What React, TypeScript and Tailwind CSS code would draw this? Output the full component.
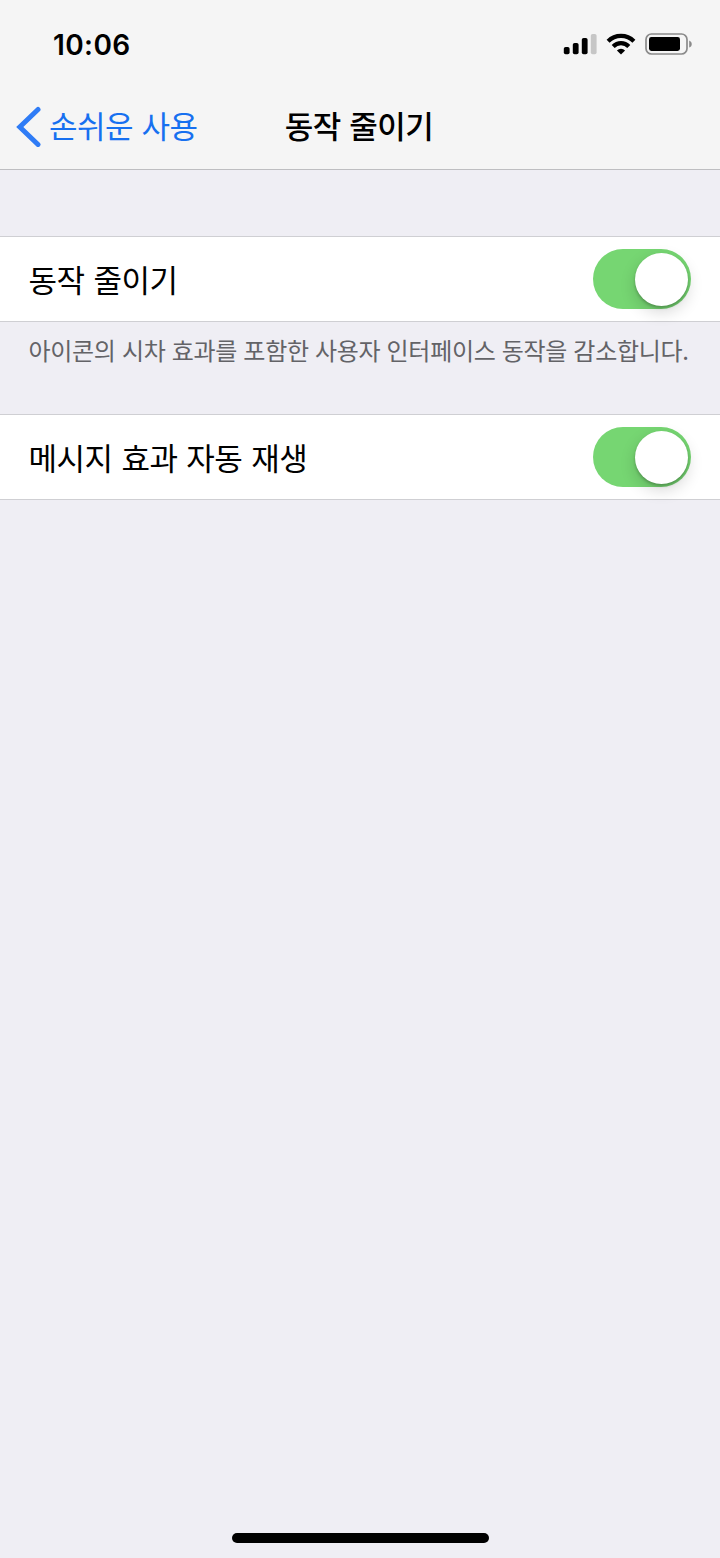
import React, { useState } from "react";

type SwitchProps = {
  label: string;
  checked: boolean;
  onChange: () => void;
};

function SignalIcon() {
  return (
    <svg width="34" height="22" viewBox="0 0 34 22">
      <rect x="0.8" y="14" width="5.8" height="7.2" rx="1.8" />
      <rect x="9.8" y="10" width="5.8" height="11.2" rx="1.8" />
      <rect x="18.8" y="5" width="5.8" height="16.2" rx="1.8" />
      <rect x="27.8" y="1" width="5.8" height="20.2" rx="1.8" fill="#c6c6c6" />
    </svg>
  );
}

function WifiIcon() {
  return (
    <svg width="30" height="22" viewBox="0 0 30 22">
      <g fill="none" stroke="#000" strokeWidth="4.2">
        <path d="M2.1 8.2a18.2 18.2 0 0 1 25.8 0" />
        <path d="M7.2 13.4a11 11 0 0 1 15.6 0" />
      </g>
      <path d="M10.9 17.4a5.9 5.9 0 0 1 8.2 0L15 21.6z" />
    </svg>
  );
}

function BatteryIcon() {
  return (
    <svg width="48" height="22" viewBox="0 0 48 22">
      <rect x="1" y="1" width="41" height="20" rx="5.5" fill="none" stroke="#8a8a8a" strokeWidth="1.7" />
      <rect x="4" y="4" width="31" height="14" rx="2.4" />
      <path d="M44.2 7.4c3.4 1.4 3.4 5.8 0 7.2z" fill="#8a8a8a" />
    </svg>
  );
}

function StatusBar() {
  return (
    <div className="flex h-[86px] items-start justify-between pr-[27px] pl-[53px]">
      <div className="mt-[27px] font-['Inter',sans-serif] text-[28px] leading-9 font-semibold tracking-[0.4px]">
        10:06
      </div>
      <div className="mt-[33px] flex">
        <SignalIcon />
        <div className="ml-[9px]">
          <WifiIcon />
        </div>
        <div className="ml-[9px]">
          <BatteryIcon />
        </div>
      </div>
    </div>
  );
}

function SwitchRow({ label, checked, onChange }: SwitchProps) {
  return (
    <div className="flex h-[86px] items-center justify-between border-y border-[#cfcfd3] bg-white pr-[29px] pl-[28.5px]">
      <span className="text-[31px] leading-10 tracking-[-0.5px] [word-spacing:2.4px]">
        {label}
      </span>
      <button
        role="switch"
        aria-checked={checked}
        aria-label={label}
        onClick={onChange}
        className={`flex h-[60px] w-[98px] items-center rounded-full px-[3px] ${
          checked ? "justify-end bg-[#76d672]" : "justify-start bg-[#e5e5ea]"
        }`}
      >
        <span className="size-[53px] rounded-full bg-white shadow-[0_6px_16px_rgba(0,0,0,0.16),0_2px_3px_rgba(0,0,0,0.22)]" />
      </button>
    </div>
  );
}

function App() {
  const [reduceMotion, setReduceMotion] = useState(true);
  const [autoPlay, setAutoPlay] = useState(true);

  return (
    <div className="flex h-[1558px] w-[720px] flex-col bg-[#efeef4] font-['Noto_Sans_CJK_KR',sans-serif] text-black">
      <header className="h-[170px] border-b border-[#bebec1] bg-[#f5f5f5]">
        <StatusBar />
        <nav className="grid h-[80px] grid-cols-[1fr_auto_1fr] items-center">
          <a href="#" className="flex items-center pl-[16px] text-[#1770f0]">
            <svg width="26" height="42" viewBox="0 0 26 42" fill="none" stroke="#2f7cf6">
              <path d="M22 4.5 3.8 22 22 39.5" strokeWidth="5" strokeLinecap="round" />
            </svg>
            <span className="ml-[7px] pb-[3px] text-[31px] leading-10 tracking-[-0.5px] [word-spacing:2px]">
              손쉬운 사용
            </span>
          </a>
          <h1 className="pr-[2px] pb-[3px] text-[31px] leading-10 font-medium tracking-[-0.5px] [word-spacing:2px]">
            동작 줄이기
          </h1>
        </nav>
      </header>

      <main className="flex-1 pt-[66px]">
        <SwitchRow
          label="동작 줄이기"
          checked={reduceMotion}
          onChange={() => setReduceMotion(!reduceMotion)}
        />
        <p className="h-[92px] pt-[12px] pl-[28.5px] text-[24px] leading-8 tracking-[-0.3px] whitespace-nowrap text-[#636367] [word-spacing:1.2px]">
          아이콘의 시차 효과를 포함한 사용자 인터페이스 동작을 감소합니다.
        </p>
        <SwitchRow
          label="메시지 효과 자동 재생"
          checked={autoPlay}
          onChange={() => setAutoPlay(!autoPlay)}
        />
      </main>

      <div className="mx-auto mb-[15px] h-[10px] w-[257px] rounded-full bg-black" />
    </div>
  );
}

export default App;
